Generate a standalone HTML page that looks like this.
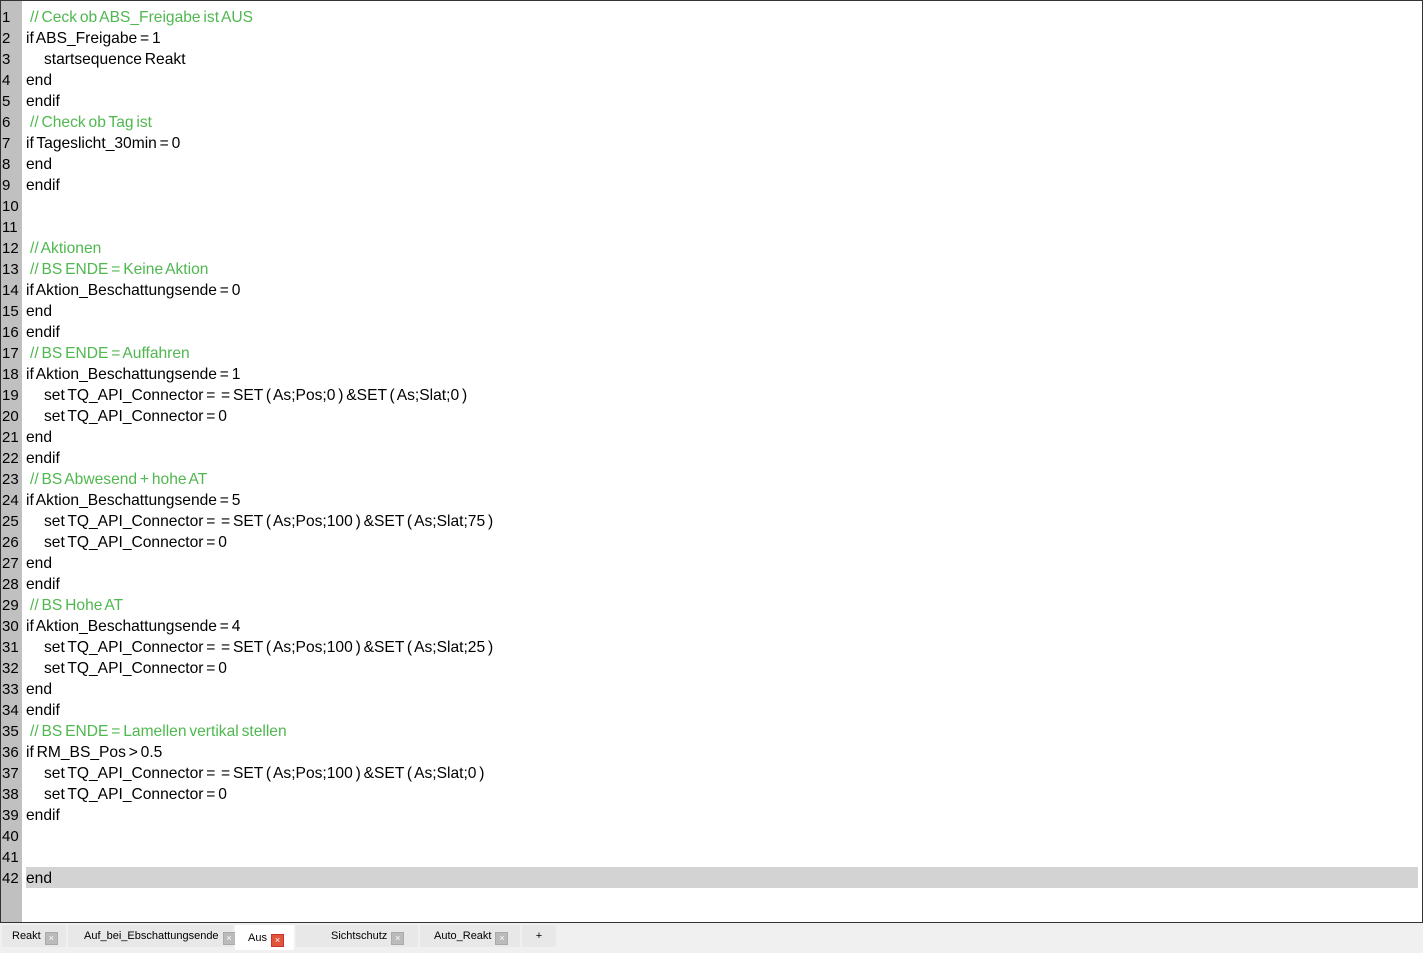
<!DOCTYPE html>
<html><head><meta charset="utf-8"><style>
html,body{margin:0;width:1423px;height:953px;overflow:hidden}
body{background:#f0f0f0;font-family:"Liberation Sans",sans-serif;position:relative}
#ed{position:absolute;left:0;top:0;width:1421px;height:921px;border:1px solid #333;background:#fff;overflow:hidden}
#gut{position:absolute;left:0;top:0;width:21px;height:921px;background:#c0c0c0}
.l{position:absolute;left:0;height:21px;line-height:21px;font-size:15.6px;color:#000;white-space:pre;width:1421px;word-spacing:-1.5px}
.n{position:absolute;left:1px;width:20px;text-align:left;font-size:15px}
.t{position:absolute;left:25px}
.c{color:#4fb84f}
.hl{position:absolute;left:25px;width:1392px;height:21px;background:#d3d3d3}
#tabs{position:absolute;top:923px;left:0;height:30px;width:1423px;font-size:11px}
.tab{position:absolute;top:2px;height:22px;line-height:22px;background:#e8e8e8;color:#000;white-space:nowrap;box-sizing:border-box}
.tab span.x{display:inline-block;width:11px;height:11px;background:#bbb;border:1px solid #aaa;vertical-align:-2px;margin-left:4px;color:#fff;font-size:9px;line-height:11px;text-align:center}
</style></head><body>
<div id="ed"><div id="gut"></div>
<div class="hl" style="top:866px"></div>
<div id="lines"></div>
</div>
<div id="tabs">
<div class="tab" style="left:2px;width:64px;padding-left:10px">Reakt<span class="x">×</span></div>
<div class="tab" style="left:68px;width:165px;padding-left:16px">Auf_bei_Ebschattungsende<span class="x">×</span></div>
<div class="tab" style="left:235px;width:59px;padding-left:13px;background:#fff;height:25px;line-height:26px">Aus<span class="x" style="background:#e0553a;border-color:#c33">×</span></div>
<div class="tab" style="left:296px;width:122px;padding-left:35px">Sichtschutz<span class="x">×</span></div>
<div class="tab" style="left:420px;width:100px;padding-left:14px">Auto_Reakt<span class="x">×</span></div>
<div class="tab" style="left:522px;width:34px;text-align:center">+</div>
</div>
<script>
var L=[["// Ceck ob ABS_Freigabe ist AUS",1],["if ABS_Freigabe = 1"],["    startsequence Reakt"],["end"],["endif"],["// Check ob Tag ist",1],["if Tageslicht_30min = 0"],["end"],["endif"],[""],[""],["// Aktionen",1],["// BS ENDE = Keine Aktion",1],["if Aktion_Beschattungsende = 0"],["end"],["endif"],["// BS ENDE = Auffahren",1],["if Aktion_Beschattungsende = 1"],["    set TQ_API_Connector =  = SET ( As;Pos;0 ) &SET ( As;Slat;0 )"],["    set TQ_API_Connector = 0"],["end"],["endif"],["// BS Abwesend + hohe AT",1],["if Aktion_Beschattungsende = 5"],["    set TQ_API_Connector =  = SET ( As;Pos;100 ) &SET ( As;Slat;75 )"],["    set TQ_API_Connector = 0"],["end"],["endif"],["// BS Hohe AT",1],["if Aktion_Beschattungsende = 4"],["    set TQ_API_Connector =  = SET ( As;Pos;100 ) &SET ( As;Slat;25 )"],["    set TQ_API_Connector = 0"],["end"],["endif"],["// BS ENDE = Lamellen vertikal stellen",1],["if RM_BS_Pos > 0.5"],["    set TQ_API_Connector =  = SET ( As;Pos;100 ) &SET ( As;Slat;0 )"],["    set TQ_API_Connector = 0"],["endif"],[""],[""],["end"]];
var h="";L.forEach(function(r,i){var t=r[0].replace(/&/g,"&amp;").replace(/>/g,"&gt;");var left=r[1]?29:(t.indexOf("    ")==0?43:25);t=t.replace(/^ +/,"");h+='<div class="l" style="top:'+(6+i*21)+'px"><span class="n">'+(i+1)+'</span><span class="t'+(r[1]?' c':'')+'" style="left:'+left+'px">'+t+'</span></div>';});
document.getElementById("lines").innerHTML=h;
</script>
</body></html>
